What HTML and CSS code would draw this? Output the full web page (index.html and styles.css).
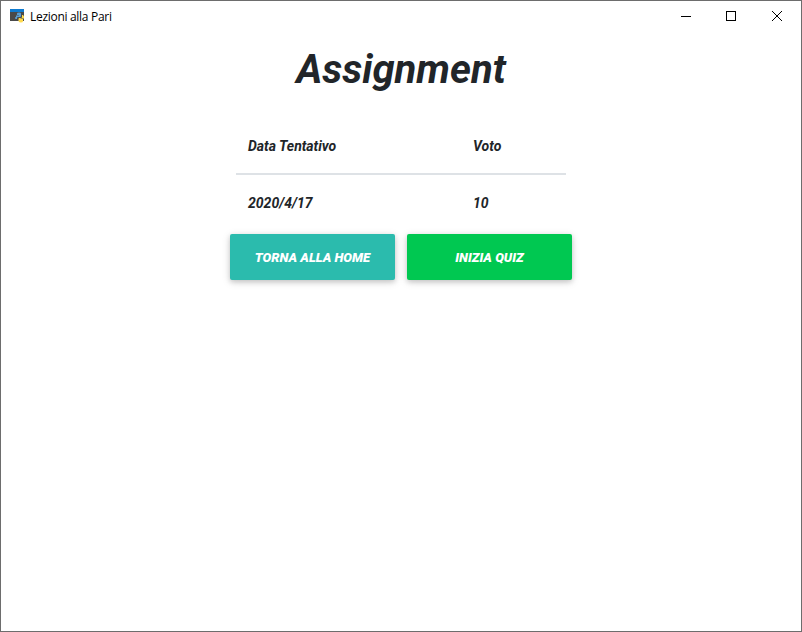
FILE: index.html
```html
<!DOCTYPE html>
<html lang="it">
<head>
<meta charset="utf-8">
<title>Lezioni alla Pari</title>
<link rel="stylesheet" href="styles.css">
</head>
<body>
<div class="window">
  <header class="titlebar">
    <svg class="app-icon" width="16" height="16" viewBox="0 0 16 16">
      <rect x="1" y="1" width="14" height="12" fill="#4a4a4a"/>
      <rect x="1" y="1" width="14" height="3" fill="#0f7bd0"/>
      <path d="M7 9V7.5h3V7H8V5.5q0-1 2-1t2 1V8q0 1-1 1H9q-1 0-1 1v1H7q-1 0-1-1t1-1z" fill="#5a9fd4"/>
      <path d="M13 7h1q1.500 1 1 3.500H11.500V11H14v2q0 1.500-2 1.500T9.500 13v-2q0-1 1-1H12q1 0 1-1z" fill="#ffd94a"/>
    </svg>
    <span class="title">Lezioni alla Pari</span>
    <div class="controls">
      <svg width="46" height="29" viewBox="0 0 46 29" shape-rendering="crispEdges"><path d="M18 14.500h10" stroke="#000"/></svg>
      <svg width="46" height="29" viewBox="0 0 46 29" shape-rendering="crispEdges"><rect x="17.500" y="9.500" width="9" height="9" fill="none" stroke="#000"/></svg>
      <svg width="46" height="29" viewBox="0 0 46 29"><path d="M17 9l10 10M27 9L17 19" stroke="#000"/></svg>
    </div>
  </header>
  <main class="content">
    <h1>Assignment</h1>
    <table>
      <thead><tr><th class="date">Data Tentativo</th><th>Voto</th></tr></thead>
      <tbody><tr><td>2020/4/17</td><td>10</td></tr></tbody>
    </table>
    <div class="actions">
      <button class="btn home">Torna alla home</button>
      <button class="btn quiz">Inizia quiz</button>
    </div>
  </main>
</div>
</body>
</html>
```
FILE: styles.css
```css
* { box-sizing: border-box; }
body { margin: 0; font-family: Roboto, sans-serif; color: #212529; background: #fff; }
.window { height: 632px; border: 1px solid #6d6d6d; overflow: hidden; }
.titlebar { height: 30px; display: flex; align-items: center; padding-left: 8px; }
.title { font: 12px "Open Sans", sans-serif; color: #000; margin-left: 5px; letter-spacing: -0.300px; }
.controls { display: flex; margin-left: auto; }
.content { display: flex; flex-direction: column; align-items: center; font-style: italic; }
h1 { margin: 15px 0 0; font-size: 40px; line-height: 48px; font-weight: 700; }
table { width: 330px; margin-top: 24px; border-collapse: separate; border-spacing: 0; font-size: 14px; font-weight: 700; }
th, td { padding: 0 12px; text-align: left; }
th { height: 57px; border-bottom: 2px solid #dee2e6; }
td { height: 55px; }
.date { width: 225px; }
.actions { display: flex; gap: 12px; margin-top: 4px; }
.btn { width: 165px; height: 46px; padding: 0; border: 0; border-radius: 2px; color: #fff; font: italic 900 13px Roboto, sans-serif; text-transform: uppercase; box-shadow: 0 2px 5px rgba(0,0,0,.16), 0 2px 10px rgba(0,0,0,.12); }
.home { background: #2bbbad; }
.quiz { background: #00c851; }
```
